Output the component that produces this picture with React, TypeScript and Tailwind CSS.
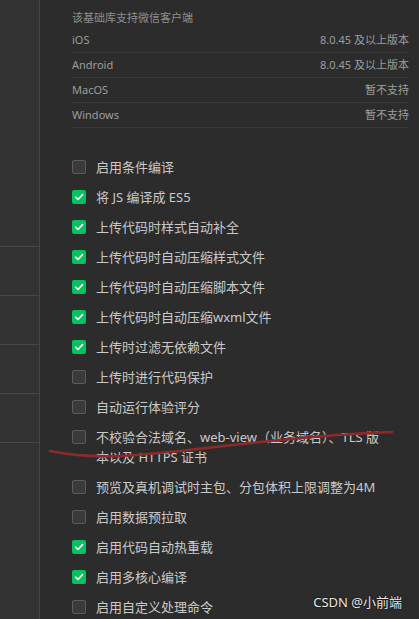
import React from 'react';

const font = { fontFamily: '"Noto Sans", "Noto Sans CJK SC", sans-serif' };

const clients = [
  { name: 'iOS', value: '8.0.45 及以上版本' },
  { name: 'Android', value: '8.0.45 及以上版本' },
  { name: 'MacOS', value: '暂不支持' },
  { name: 'Windows', value: '暂不支持' },
];

const options: { label: React.ReactNode; checked: boolean }[] = [
  { label: '启用条件编译', checked: false },
  { label: '将 JS 编译成 ES5', checked: true },
  { label: '上传代码时样式自动补全', checked: true },
  { label: '上传代码时自动压缩样式文件', checked: true },
  { label: '上传代码时自动压缩脚本文件', checked: true },
  { label: '上传代码时自动压缩wxml文件', checked: true },
  { label: '上传时过滤无依赖文件', checked: true },
  { label: '上传时进行代码保护', checked: false },
  { label: '自动运行体验评分', checked: false },
  {
    label: (
      <>
        不校验合法域名、web-view（业务域名）、TLS 版
        <br />
        本以及 HTTPS 证书
      </>
    ),
    checked: false,
  },
  { label: '预览及真机调试时主包、分包体积上限调整为4M', checked: false },
  { label: '启用数据预拉取', checked: false },
  { label: '启用代码自动热重载', checked: true },
  { label: '启用多核心编译', checked: true },
  { label: '启用自定义处理命令', checked: false },
];

const Checkbox = ({ checked }: { checked: boolean }) =>
  checked ? (
    <span className="mt-[3px] flex h-[14px] w-[14px] shrink-0 items-center justify-center rounded-[2px] bg-[#07c160]">
      <svg width="10" height="10" viewBox="0 0 10 10" fill="none">
        <path d="M1.6 5.2 L4 7.5 L8.5 2.6" stroke="#fff" strokeWidth="1.6" strokeLinecap="round" strokeLinejoin="round" />
      </svg>
    </span>
  ) : (
    <span className="mt-[3px] h-[14px] w-[14px] shrink-0 rounded-[2px] border border-[#5c5c5c] bg-[#3a3a3a]" />
  );

export default function App() {
  return (
    <div className="relative flex h-[619px] w-[419px] overflow-hidden bg-[#2c2c2c]" style={font}>
      {/* sidebar */}
      <div className="flex w-[40px] shrink-0 flex-col border-r border-[#464646] bg-[#323232]">
        <div className="h-[247px] border-b border-[#464646]" />
        <div className="h-[49px] border-b border-[#464646]" />
        <div className="h-[49px] border-b border-[#464646]" />
        <div className="h-[49px] border-b border-[#464646]" />
        <div className="h-[49px] border-b border-[#464646]" />
      </div>

      {/* main */}
      <div className="flex-1 pl-[32px] pr-[10px] pt-[8px]">
        <div className="h-[20px] text-[11px] leading-[20px] text-[#8e8e8e]">该基础库支持微信客户端</div>
        {clients.map((c) => (
          <div
            key={c.name}
            className="flex h-[25px] items-center justify-between border-b border-[#3a3a3a] text-[11px] text-[#9c9c9c]"
          >
            <span>{c.name}</span>
            <span>{c.value}</span>
          </div>
        ))}

        <div className="mt-[24px] flex flex-col">
          {options.map((o, i) => (
            <div key={i} className="flex gap-[10px] py-[5px]">
              <Checkbox checked={o.checked} />
              <span className="whitespace-nowrap text-[13px] leading-[20px] text-[#c9c9c9]">{o.label}</span>
            </div>
          ))}
        </div>
      </div>

      {/* red annotation stroke */}
      <svg className="pointer-events-none absolute left-0 top-0" width="419" height="619">
        <path
          d="M50 451 C 70 455, 90 457, 120 456 C 170 453, 220 446, 270 441 C 320 436, 360 433, 392 432"
          stroke="#8e2a2c"
          strokeWidth="2.4"
          fill="none"
          strokeLinecap="round"
        />
      </svg>

      {/* watermark */}
      <div
        className="absolute bottom-[8px] right-[17px] text-[13px] leading-[18px] text-[#e6e6e6]"
        style={{ textShadow: '0 0 2px #000' }}
      >
        CSDN @小前端
      </div>
    </div>
  );
}
